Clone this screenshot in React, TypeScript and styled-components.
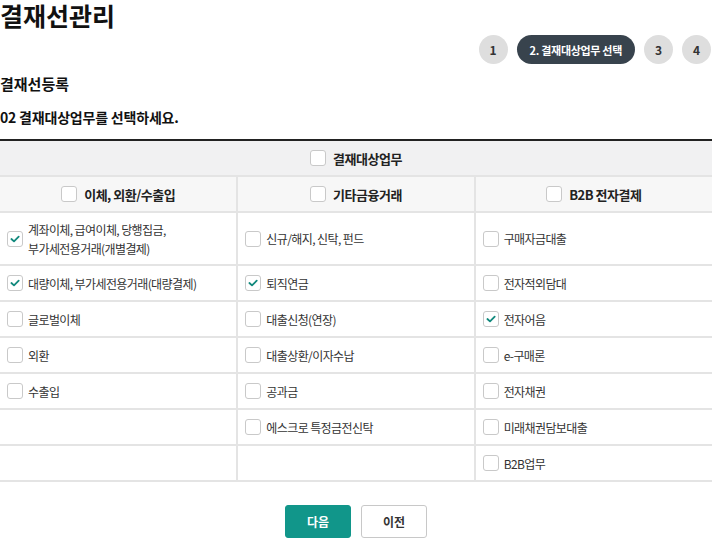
import * as React from "react";
import styled, { createGlobalStyle } from "styled-components";

const GlobalStyle = createGlobalStyle`
  body {
    margin: 0;
    background: #fff;
    font-family: "Noto Sans CJK KR", "Noto Sans", sans-serif;
    color: #222;
  }
`;

const Page = styled.div`
  width: 712px;
  overflow: hidden;
`;

const Title = styled.h1`
  margin: 0;
  font-size: 25px;
  line-height: 30px;
  font-weight: 700;
  color: #111;
`;

const Steps = styled.div`
  display: flex;
  justify-content: flex-end;
  gap: 9px;
  margin-top: 5px;
  padding-right: 1px;
`;

const Step = styled.div<{ $active?: boolean }>`
  height: 29px;
  min-width: 29px;
  padding: 0 ${(p) => (p.$active ? "13px" : "0")};
  border-radius: 15px;
  box-sizing: border-box;
  display: flex;
  align-items: center;
  justify-content: center;
  font-size: ${(p) => (p.$active ? "11px" : "12px")};
  letter-spacing: ${(p) => (p.$active ? "-0.3px" : "0")};
  font-weight: 700;
  background: ${(p) => (p.$active ? "#38434d" : "#dedede")};
  color: ${(p) => (p.$active ? "#fff" : "#333")};
`;

const SubTitle = styled.h2`
  margin: 9px 0 0 0;
  font-size: 15px;
  line-height: 22px;
  font-weight: 700;
  color: #111;
`;

const Guide = styled.p`
  margin: 11px 0 0 0;
  font-size: 14px;
  line-height: 22px;
  font-weight: 700;
  color: #111;
  letter-spacing: -0.2px;
`;

const Table = styled.table`
  margin-top: 11px;
  width: 100%;
  border-collapse: collapse;
  table-layout: fixed;
  border-top: 2px solid #222;
`;

const HeadCell = styled.th<{ $tone: "top" | "sub" }>`
  height: 34px;
  padding: 0;
  font-size: 13px;
  font-weight: 700;
  color: #222;
  background: ${(p) => (p.$tone === "top" ? "#f1f1f2" : "#f7f7f7")};
  border-bottom: 2px solid #e4e4e4;
  border-left: 2px solid #e4e4e4;
  &:first-child {
    border-left: none;
  }
`;

const Cell = styled.td<{ $tall?: boolean }>`
  height: ${(p) => (p.$tall ? "51px" : "34px")};
  padding: 0 0 0 7px;
  border-bottom: 2px solid #e4e4e4;
  border-left: 2px solid #e4e4e4;
  vertical-align: middle;
  &:first-child {
    border-left: none;
  }
`;

const Label = styled.label<{ $center?: boolean }>`
  display: flex;
  align-items: center;
  justify-content: ${(p) => (p.$center ? "center" : "flex-start")};
  gap: 5px;
  font-size: 12px;
  line-height: 19px;
  letter-spacing: -0.6px;
  color: #333;
`;

const HeadLabel = styled(Label)`
  font-size: 13px;
  font-weight: 700;
  color: #222;
  gap: 7px;
  letter-spacing: -0.5px;
`;

const Box = styled.span`
  flex: none;
  width: 16px;
  height: 16px;
  box-sizing: border-box;
  border: 1px solid #c9c9c9;
  border-radius: 3px;
  background: #fff;
  display: flex;
  align-items: center;
  justify-content: center;
`;

const Buttons = styled.div`
  display: flex;
  justify-content: center;
  gap: 10px;
  margin-top: 23px;
`;

const Button = styled.button<{ $primary?: boolean }>`
  width: 66px;
  height: 33px;
  border-radius: 3px;
  font-family: inherit;
  font-size: 12px;
  font-weight: 700;
  cursor: pointer;
  border: 1px solid ${(p) => (p.$primary ? "#11968a" : "#c8c8c8")};
  background: ${(p) => (p.$primary ? "#11968a" : "#fff")};
  color: ${(p) => (p.$primary ? "#fff" : "#333")};
`;

function Check({ checked }: { checked?: boolean }) {
  return (
    <Box>
      {checked && (
        <svg width="12" height="12" viewBox="0 0 12 12">
          <path d="M2.4 6 L5 8.4 L9.7 3.7" fill="none" stroke="#11897d" strokeWidth="1.8" strokeLinecap="round" strokeLinejoin="round" />
        </svg>
      )}
    </Box>
  );
}

type Item = { text: React.ReactNode; checked?: boolean } | null;

const rows: Item[][] = [
  [
    { text: <span>계좌이체, 급여이체, 당행집금,<br />부가세전용거래(개별결제)</span>, checked: true },
    { text: "신규/해지, 신탁, 펀드" },
    { text: "구매자금대출" },
  ],
  [
    { text: "대량이체, 부가세전용거래(대량결제)", checked: true },
    { text: "퇴직연금", checked: true },
    { text: "전자적외담대" },
  ],
  [{ text: "글로벌이체" }, { text: "대출신청(연장)" }, { text: "전자어음", checked: true }],
  [{ text: "외환" }, { text: "대출상환/이자수납" }, { text: "e-구매론" }],
  [{ text: "수출입" }, { text: "공과금" }, { text: "전자채권" }],
  [null, { text: "에스크로 특정금전신탁" }, { text: "미래채권담보대출" }],
  [null, null, { text: "B2B업무" }],
];

export default function App() {
  return (
    <Page>
      <GlobalStyle />
      <Title>결재선관리</Title>
      <Steps>
        <Step>1</Step>
        <Step $active>2. 결재대상업무 선택</Step>
        <Step>3</Step>
        <Step>4</Step>
      </Steps>
      <SubTitle>결재선등록</SubTitle>
      <Guide>02 결재대상업무를 선택하세요.</Guide>
      <Table>
        <thead>
          <tr>
            <HeadCell $tone="top" colSpan={3}>
              <HeadLabel $center>
                <Check />
                결재대상업무
              </HeadLabel>
            </HeadCell>
          </tr>
          <tr>
            {["이체, 외환/수출입", "기타금융거래", "B2B 전자결제"].map((t) => (
              <HeadCell $tone="sub" key={t}>
                <HeadLabel $center>
                  <Check />
                  {t}
                </HeadLabel>
              </HeadCell>
            ))}
          </tr>
        </thead>
        <tbody>
          {rows.map((row, i) => (
            <tr key={i}>
              {row.map((item, j) => (
                <Cell key={j} $tall={i === 0}>
                  {item && (
                    <Label>
                      <Check checked={item.checked} />
                      {item.text}
                    </Label>
                  )}
                </Cell>
              ))}
            </tr>
          ))}
        </tbody>
      </Table>
      <Buttons>
        <Button $primary>다음</Button>
        <Button>이전</Button>
      </Buttons>
    </Page>
  );
}
